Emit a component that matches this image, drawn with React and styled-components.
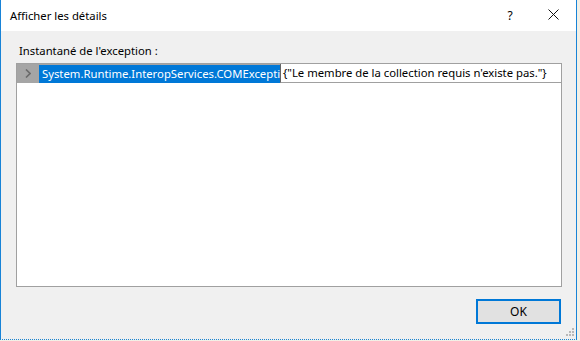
import React from 'react';
import styled, { createGlobalStyle } from 'styled-components';

const GlobalStyle = createGlobalStyle`
  html, body {
    margin: 0;
    padding: 0;
    background: #f3f0e6;
  }
  #root {
    width: 580px;
    height: 341px;
    overflow: hidden;
  }
`;

function App() {
  return (
    <>
      <GlobalStyle />
      <Dialog>
        <TitleBar>
          <Title>Afficher les détails</Title>
          <TitleButtons>
            <HelpButton>?</HelpButton>
            <CloseButton>
              <svg width="11" height="11" viewBox="0 0 11 11">
                <path d="M0.5 0.5 L10.5 10.5 M10.5 0.5 L0.5 10.5" stroke="#111" strokeWidth="1" fill="none" />
              </svg>
            </CloseButton>
          </TitleButtons>
        </TitleBar>
        <Body>
          <Label>Instantané de l'exception :</Label>
          <Tree>
            <Row>
              <Expander>
                <svg width="6" height="9" viewBox="0 0 6 9">
                  <path d="M1 0.5 L5 4.5 L1 8.5" stroke="#6a6a6a" strokeWidth="1.6" fill="none" />
                </svg>
              </Expander>
              <NameCell>System.Runtime.InteropServices.COMExcepti</NameCell>
              <ValueCell>{'{"Le membre de la collection requis n\'existe pas."}'}</ValueCell>
            </Row>
          </Tree>
          <Footer>
            <OkButton>OK</OkButton>
          </Footer>
          <Grip>
            <svg width="8" height="8" viewBox="0 0 8 8">
              <rect x="6" y="0" width="2" height="2" fill="#b8b8b8" />
              <rect x="3" y="3" width="2" height="2" fill="#b8b8b8" />
              <rect x="6" y="3" width="2" height="2" fill="#b8b8b8" />
              <rect x="0" y="6" width="2" height="2" fill="#b8b8b8" />
              <rect x="3" y="6" width="2" height="2" fill="#b8b8b8" />
              <rect x="6" y="6" width="2" height="2" fill="#b8b8b8" />
            </svg>
          </Grip>
        </Body>
      </Dialog>
    </>
  );
}

// Styled Components
const Dialog = styled.div`
  width: 575px;
  height: 339px;
  border: 1px solid #1883d7;
  border-top: none;
  border-bottom: 1px dotted #1883d7;
  display: flex;
  flex-direction: column;
  font-family: "Noto Sans", "Open Sans", sans-serif;
  font-size: 11.3px;
  color: #000;
`;

const TitleBar = styled.div`
  height: 31px;
  background: #fff;
  display: flex;
  align-items: center;
  justify-content: space-between;
  padding-left: 9px;
`;

const Title = styled.span`
  font-size: 11.3px;
  margin-top: -1px;
`;

const TitleButtons = styled.div`
  display: flex;
  align-items: center;
  height: 100%;
`;

const HelpButton = styled.span`
  width: 40px;
  text-align: center;
  font-size: 12px;
  margin-top: -1px;
`;

const CloseButton = styled.span`
  width: 46px;
  height: 100%;
  display: flex;
  align-items: center;
  justify-content: center;
  margin-top: -2px;
`;

const Body = styled.div`
  flex: 1;
  background: #f0f0f0;
  padding: 12px 14px 0 15px;
  display: flex;
  flex-direction: column;
  position: relative;
`;

const Label = styled.div`
  line-height: 16px;
  height: 16px;
  padding-left: 3px;
  margin-bottom: 4px;
`;

const Tree = styled.div`
  height: 222px;
  border: 1px solid #a0a0a0;
  background: #fff;
`;

const Row = styled.div`
  display: flex;
  height: 19px;
  align-items: stretch;
  white-space: nowrap;
`;

const Expander = styled.div`
  width: 22px;
  background: #a5a5a5;
  display: flex;
  align-items: center;
  justify-content: center;
`;

const NameCell = styled.div`
  width: 238px;
  overflow: hidden;
  background: #0078d7;
  color: #fff;
  padding-left: 3px;
  border-top: 1px solid #a5a5a5;
  line-height: 18px;
`;

const ValueCell = styled.div`
  flex: 1;
  border-left: 1px solid #646464;
  border-bottom: 1px solid #a0a0a0;
  padding-left: 2px;
  line-height: 18px;
  overflow: hidden;
`;

const Footer = styled.div`
  display: flex;
  justify-content: flex-end;
  margin-top: 12px;
  padding-right: 1px;
`;

const OkButton = styled.button`
  width: 85px;
  height: 25px;
  background: #e1e1e1;
  border: 2px solid #0078d7;
  font-family: "Noto Sans", "Open Sans", sans-serif;
  font-size: 12px;
  color: #000;
  padding: 0;
`;

const Grip = styled.div`
  position: absolute;
  right: 2px;
  bottom: 3px;
  line-height: 0;
`;

export default App;
